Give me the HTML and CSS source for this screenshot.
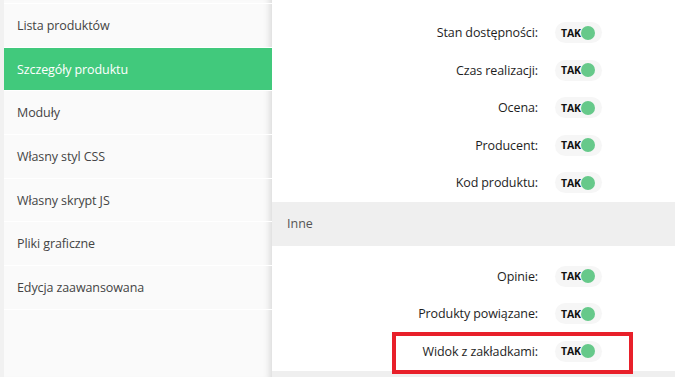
FILE: index.html
```html
<!DOCTYPE html>
<html lang="pl">
<head>
<meta charset="utf-8">
<title>Ustawienia</title>
<link rel="stylesheet" href="styles.css">
</head>
<body>
<div class="layout">
  <aside class="sidebar">
    <ul class="menu">
      <li class="menu-item">Lista produktów</li>
      <li class="menu-item active">Szczegóły produktu</li>
      <li class="menu-item">Moduły</li>
      <li class="menu-item">Własny styl CSS</li>
      <li class="menu-item">Własny skrypt JS</li>
      <li class="menu-item">Pliki graficzne</li>
      <li class="menu-item">Edycja zaawansowana</li>
    </ul>
  </aside>
  <main class="content">
    <section class="group group-first">
      <div class="row"><span class="label">Stan dostępności:</span><span class="toggle"><b>TAK</b><i class="knob"></i></span></div>
      <div class="row"><span class="label">Czas realizacji:</span><span class="toggle"><b>TAK</b><i class="knob"></i></span></div>
      <div class="row"><span class="label">Ocena:</span><span class="toggle"><b>TAK</b><i class="knob"></i></span></div>
      <div class="row"><span class="label">Producent:</span><span class="toggle"><b>TAK</b><i class="knob"></i></span></div>
      <div class="row"><span class="label">Kod produktu:</span><span class="toggle"><b>TAK</b><i class="knob"></i></span></div>
    </section>
    <h3 class="section-title">Inne</h3>
    <section class="group group-second">
      <div class="row"><span class="label">Opinie:</span><span class="toggle"><b>TAK</b><i class="knob"></i></span></div>
      <div class="row"><span class="label">Produkty powiązane:</span><span class="toggle"><b>TAK</b><i class="knob"></i></span></div>
      <div class="row highlighted"><span class="label">Widok z zakładkami:</span><span class="toggle"><b>TAK</b><i class="knob"></i></span><span class="marker"></span></div>
    </section>
    <div class="footer-bar"></div>
  </main>
</div>
</body>
</html>
```
FILE: styles.css
```css
* { box-sizing: border-box; }
html, body { margin: 0; padding: 0; height: 100%; overflow: hidden; }
body {
  font-family: "Open Sans", "Noto Sans", sans-serif;
  background: #fff;
  color: #222;
}
.layout {
  display: flex;
  height: 377px;
}
.sidebar {
  width: 272px;
  flex: 0 0 272px;
  background: #fafafa;
  border-left: 4px solid #f1f1f1;
  box-shadow: inset -8px 0 7px -6px rgba(0,0,0,0.14);
  padding-top: 3px;
}
.menu {
  list-style: none;
  margin: 0;
  padding: 0;
  border-top: 1px solid #fff;
}
.menu-item {
  height: 43.7px;
  display: flex;
  align-items: center;
  padding-left: 13px;
  font-size: 12.5px;
  color: #444;
  border-bottom: 1px solid #fff;
  letter-spacing: -0.1px;
}
.menu-item.active {
  background: #41c97c;
  color: #fff;
}
.content {
  flex: 1;
  display: flex;
  flex-direction: column;
}
.group-first { padding-top: 14px; }
.group-second { padding-top: 12px; }
.row {
  position: relative;
  height: 37.5px;
  display: flex;
  align-items: center;
}
.label {
  width: 266px;
  text-align: right;
  font-size: 12.5px;
  color: #1e1e1e;
  letter-spacing: -0.1px;
}
.toggle {
  margin-left: 17px;
  width: 47px;
  height: 21px;
  border-radius: 11px;
  background: #f6f6f6;
  display: flex;
  align-items: center;
  padding-left: 6px;
}
.toggle b {
  font-size: 10.5px;
  font-weight: 700;
  color: #111;
  letter-spacing: -0.2px;
}
.knob {
  width: 14px;
  height: 14px;
  border-radius: 50%;
  background: #66c98a;
  margin-left: 0;
}
.section-title {
  margin: 0;
  height: 44px;
  background: #efefef;
  display: flex;
  align-items: center;
  padding-left: 15px;
  font-size: 12.5px;
  font-weight: 400;
  color: #555;
}
.marker {
  position: absolute;
  left: 120px;
  top: -1px;
  width: 241px;
  height: 42px;
  border: 4px solid #e8202a;
}
.footer-bar {
  flex: 1;
  background: #efefef;
  margin-top: 1px;
}
```
